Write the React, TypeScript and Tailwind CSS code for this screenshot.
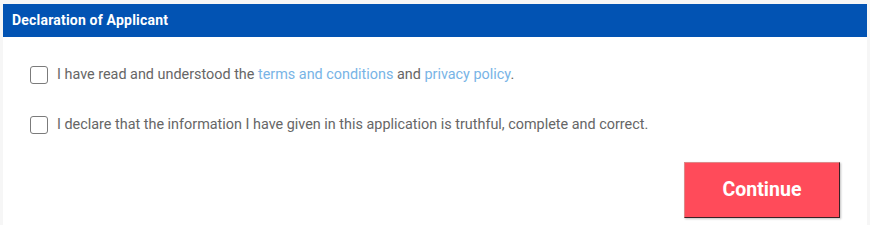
export default function App() {
  return (
    <div className="h-[225px] overflow-hidden bg-[#f6f6f6] pt-[4px] px-[3px] font-['Roboto',sans-serif]">
      <div className="w-[864px] h-[221px] bg-white">
        <div className="h-[33px] bg-[#0253b3] flex items-center pl-[9px]">
          <h2 className="text-[14px] font-bold text-white tracking-[0.2px]">
            Declaration of Applicant
          </h2>
        </div>

        <div className="flex flex-col gap-[32px] pt-[29px] pl-[27px]">
          <label className="flex items-center gap-[9px] h-[18px]">
            <span className="w-[18px] h-[18px] rounded-[3px] border-[1.5px] border-[#7b7b7b] bg-white" />
            <span className="text-[14.4px] text-[#666]">
              I have read and understood the{" "}
              <a className="text-[#78b4e6]">terms and conditions</a> and{" "}
              <a className="text-[#78b4e6]">privacy policy</a>.
            </span>
          </label>
          <label className="flex items-center gap-[9px] h-[18px]">
            <span className="w-[18px] h-[18px] rounded-[3px] border-[1.5px] border-[#7b7b7b] bg-white" />
            <span className="text-[14.4px] text-[#666]">
              I declare that the information I have given in this application is truthful, complete and correct.
            </span>
          </label>
        </div>

        <div className="flex justify-end pr-[27px] pt-[28px]">
          <button className="w-[156px] h-[56px] bg-[#ff4b5a] text-white text-[19.5px] font-bold border-l border-t border-[#d88] border-r-[1.5px] border-b-[1.5px] border-r-[#3a2226] border-b-[#3a2226] shadow-[1px_1px_2px_rgba(0,0,0,0.25)]">
            Continue
          </button>
        </div>
      </div>
    </div>
  );
}
